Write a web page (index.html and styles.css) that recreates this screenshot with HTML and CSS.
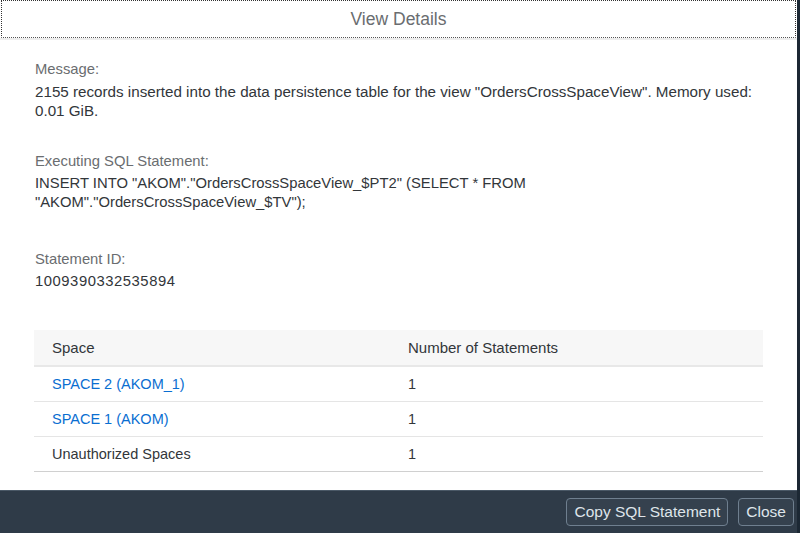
FILE: index.html
```html
<!DOCTYPE html>
<html>
<head>
<meta charset="utf-8">
<link rel="stylesheet" href="styles.css">
</head>
<body>
<div class="dialog">
  <header class="header"><h1 class="title">View Details</h1></header>
  <main class="content">
    <section class="field f-msg">
      <div class="label">Message:</div>
      <div class="value msg">2155 records inserted into the data persistence table for the view "OrdersCrossSpaceView". Memory used: 0.01 GiB.</div>
    </section>
    <section class="field f-sql">
      <div class="label">Executing SQL Statement:</div>
      <div class="value">INSERT INTO "AKOM"."OrdersCrossSpaceView_$PT2" (SELECT * FROM "AKOM"."OrdersCrossSpaceView_$TV");</div>
    </section>
    <section class="field f-id">
      <div class="label">Statement ID:</div>
      <div class="value id">1009390332535894</div>
    </section>
    <table class="table">
      <thead>
        <tr><th class="c1">Space</th><th>Number of Statements</th></tr>
      </thead>
      <tbody>
        <tr><td class="c1"><a class="link">SPACE 2 (AKOM_1)</a></td><td>1</td></tr>
        <tr><td class="c1"><a class="link">SPACE 1 (AKOM)</a></td><td>1</td></tr>
        <tr class="last"><td class="c1">Unauthorized Spaces</td><td>1</td></tr>
      </tbody>
    </table>
  </main>
  <footer class="footer">
    <button class="btn">Copy SQL Statement</button>
    <button class="btn">Close</button>
  </footer>
</div>
</body>
</html>
```
FILE: styles.css
```css
html, body {
  margin: 0;
  padding: 0;
  height: 100%;
  background: #1c2834;
  font-family: "Liberation Sans", Arial, sans-serif;
}
.dialog {
  width: 797px;
  height: 533px;
  background: #fff;
  display: flex;
  flex-direction: column;
}
.header {
  height: 38px;
  margin: 0 1px;
  border: 1px dotted #333;
  border-bottom: 1px dotted #555;
  display: flex;
  align-items: center;
  justify-content: center;
  box-sizing: border-box;
}
.title {
  margin: 0;
  font-size: 17.5px;
  font-weight: normal;
  color: #6a6d70;
}
.content {
  flex: 1;
  border-top: 2px solid #ededed;
  padding: 19px 34px 0 35px;
}
.field.f-msg { margin-bottom: 31px; }
.field.f-sql { margin-bottom: 37px; }
.field.f-id { margin-bottom: 39px; }
.label {
  font-size: 14.8px;
  color: #6a6d70;
  line-height: 20px;
  margin-bottom: 3px;
}
.value {
  font-size: 14.8px;
  color: #32363a;
  line-height: 19px;
}
.value.msg {
  font-size: 15.2px;
}
.value.id {
  letter-spacing: 0.55px;
  margin-top: 2px;
}
.table {
  margin-left: -1px;
  width: 729px;
  border-collapse: collapse;
  font-size: 14.5px;
  color: #32363a;
}
.table th {
  background: #f7f7f7;
  height: 35px;
  text-align: left;
  font-weight: normal;
  font-size: 15px;
  padding: 0;
  border-bottom: 2px solid #e8e8e8;
}
.table td {
  height: 34px;
  padding: 0;
  border-bottom: 1px solid #e5e5e5;
}
.table .c1 {
  padding-left: 18px;
  width: 356px;
}
.table tr.last td {
  border-bottom: 1px solid #d0d0d0;
}
.link {
  color: #0a6ed1;
  text-decoration: none;
}
.footer {
  height: 43px;
  background: #2f3b48;
  border-top: 1px solid #4a5866;
  display: flex;
  justify-content: flex-end;
  align-items: center;
  gap: 10px;
  padding-right: 3px;
  box-sizing: border-box;
}
.btn {
  height: 28px;
  padding: 0 7px;
  background: #35414e;
  border: 1px solid #6f7f8f;
  border-radius: 4px;
  color: #dfe5ea;
  font-family: "Liberation Sans", Arial, sans-serif;
  font-size: 15.5px;
}
```
